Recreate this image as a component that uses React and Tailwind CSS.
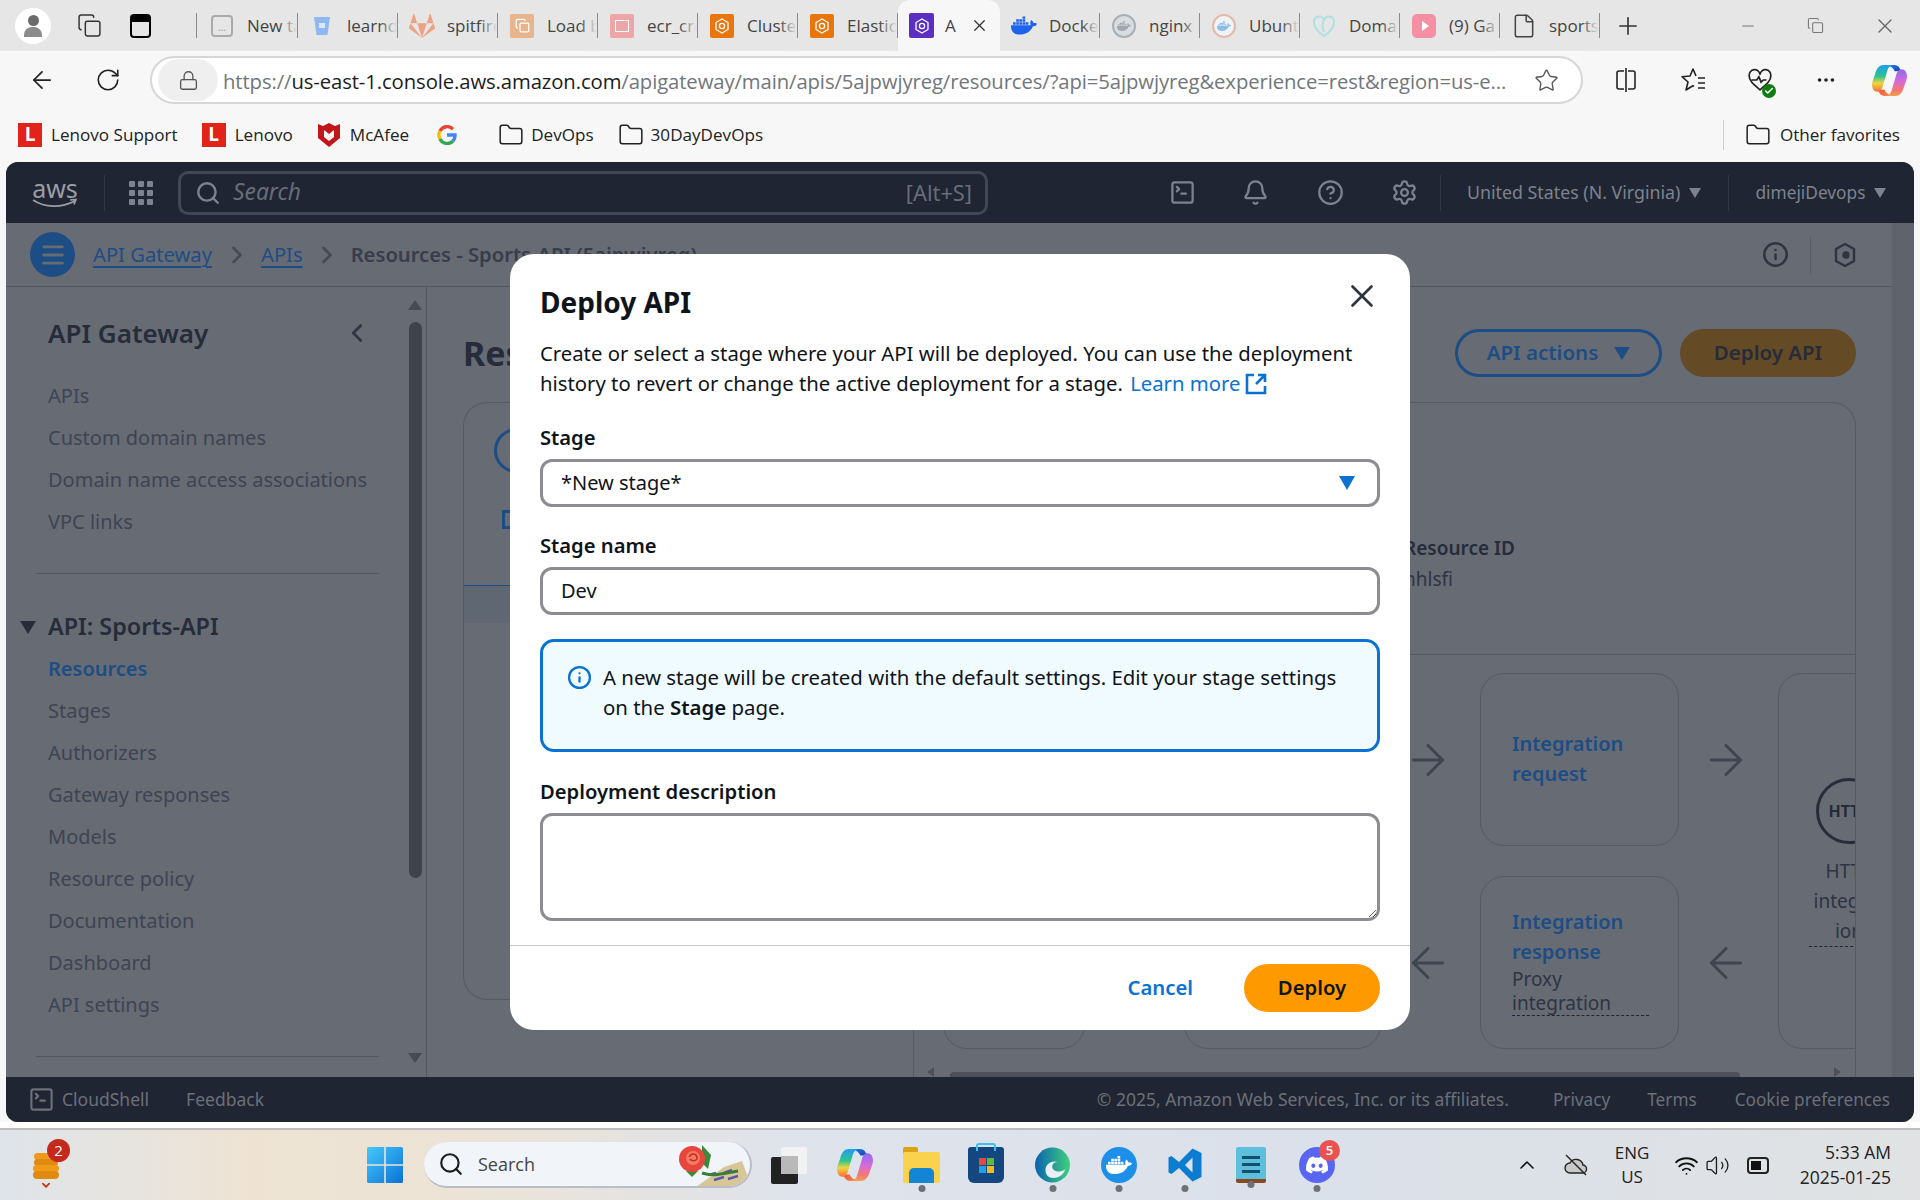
import React from "react";
import {
  ArrowLeft, ArrowRight, Bell, Check, ChevronDown, ChevronLeft, ChevronRight, ChevronUp, CircleHelp, Copy, File, Folder,
  Info, Lock, Menu, Minus, MoreHorizontal, Plus, RotateCw, Search, Settings, SquareTerminal, Star,
  Volume2, Wifi, X,
} from "lucide-react";
import { FaDiscord, FaDocker, FaGitlab } from "react-icons/fa";

const Square = ({ cls, children }) => (
  <span className={`flex h-[24px] w-[24px] shrink-0 items-center justify-center rounded-[2px] ${cls}`}>{children}</span>
);

const HexMark = ({ stroke = "#fff" }) => (
  <svg width="16" height="16" viewBox="0 0 16 16" fill="none" stroke={stroke} strokeWidth="1.3">
    <path d="M8 1l6 3.5v7L8 15l-6-3.5v-7z" />
    <circle cx="8" cy="8" r="2.6" />
  </svg>
);

const tabs = [
  { title: "New ta", icon: <span className="flex h-[22px] w-[22px] items-center justify-center rounded-[4px] border-2 border-[#aaa] pt-[3px] text-[10px] leading-none text-[#999]">...</span> },
  { title: "learnd", icon: <svg width="20" height="22" viewBox="0 0 20 22"><path d="M2 2h16l-2.5 18h-11z" fill="#8fb8f2" /><rect x="7" y="8" width="6" height="5" fill="#dbe8fb" /></svg> },
  { title: "spitfire", icon: <FaGitlab size={26} className="text-[#eda283]" /> },
  { title: "Load b", icon: <Square cls="bg-[#e8b48c]"><Copy size={15} className="text-white" /></Square> },
  { title: "ecr_cre", icon: <Square cls="bg-[#eca6a6]"><span className="h-[12px] w-[14px] border border-white" /></Square> },
  { title: "Cluste", icon: <Square cls="bg-[#e8760d]"><HexMark /></Square> },
  { title: "Elastic", icon: <Square cls="bg-[#e8760d]"><HexMark /></Square> },
];
const tabsRight = [
  { title: "Docke", icon: <FaDocker size={27} className="text-[#1d63ed]" /> },
  { title: "nginx", icon: <span className="flex h-[24px] w-[24px] items-center justify-center rounded-full border-2 border-[#a8b0b5] bg-[#d8dde0]"><FaDocker size={14} className="text-[#a0a8ad]" /></span> },
  { title: "Ubunt", icon: <span className="flex h-[24px] w-[24px] items-center justify-center rounded-full border-2 border-[#e5b9a8] bg-[#eef3f8]"><FaDocker size={14} className="text-[#8fbce6]" /></span> },
  { title: "Doma", icon: <svg width="24" height="24" viewBox="0 0 24 24" fill="none" stroke="#aee0e3" strokeWidth="2"><path d="M12 22C6 18 2 13 2 8a5 5 0 0 1 10-1 5 5 0 0 1 10 1c0 5-4 10-10 14z" /><path d="M12 7c-2 3-2 7 0 11" /></svg> },
  { title: "(9) Ga", icon: <span className="flex h-[24px] w-[24px] items-center justify-center rounded-[5px] bg-[#f58fa3]"><span className="ml-[2px] h-0 w-0 border-y-[5px] border-l-[7px] border-y-transparent border-l-white" /></span> },
  { title: "sports", icon: <File size={26} strokeWidth={1.4} className="text-[#444]" /> },
];

function Tab({ title, icon }) {
  return (
    <div className="relative flex h-[51px] w-[100px] shrink-0 items-center overflow-hidden pl-[11px]">
      <span className="flex w-[26px] shrink-0 justify-center">{icon}</span>
      <span className="ml-[12px] whitespace-nowrap text-[17px] text-[#444]">{title}</span>
      <span className="absolute right-[1px] top-0 h-full w-[18px] bg-gradient-to-r from-transparent to-[#e6e6e6]" />
      <span className="absolute right-0 top-[13px] h-[25px] w-px bg-[#8a8a8a]" />
    </div>
  );
}

function CopilotLogo({ size = 35 }) {
  return (
    <svg width={size} height={size} viewBox="0 0 34 32">
      <defs>
        <linearGradient id="cpLeft" x1="0" y1="0" x2="0" y2="1">
          <stop offset="0" stopColor="#1f9cf0" /><stop offset=".42" stopColor="#2fc48d" /><stop offset=".68" stopColor="#f2d53c" /><stop offset="1" stopColor="#f0703c" />
        </linearGradient>
        <linearGradient id="cpRight" x1="0" y1="0" x2="0" y2="1">
          <stop offset="0" stopColor="#8a6cf0" /><stop offset=".45" stopColor="#d86ad8" /><stop offset=".8" stopColor="#f57a70" /><stop offset="1" stopColor="#f2a04a" />
        </linearGradient>
        <linearGradient id="cpTop" x1="0" y1="0" x2="1" y2="1"><stop offset="0" stopColor="#1a7fe8" /><stop offset="1" stopColor="#1e3fb8" /></linearGradient>
        <linearGradient id="cpBottom" x1="0" y1="0" x2="1" y2="1"><stop offset="0" stopColor="#f0542c" /><stop offset="1" stopColor="#f58a5c" /></linearGradient>
      </defs>
      <path d="M14 1h8c3 0 5 2 6 6h-6c-1-3-4-5-8-6z" fill="url(#cpTop)" />
      <path d="M20 31h-8c-3 0-5-2-6-6h6c1 3 4 5 8 6z" fill="url(#cpBottom)" />
      <path d="M11 1h10c-3 0-5 2-6 5l-5 17c-1 2-2 4-5 4-3 0-5-3-5-7 0-2 1-5 3-10 1-5 4-9 8-9z" fill="url(#cpLeft)" />
      <path d="M23 31H13c3 0 5-2 6-5l5-17c1-2 2-4 5-4 3 0 5 3 5 7 0 2-1 5-3 10-1 5-4 9-8 9z" fill="url(#cpRight)" />
    </svg>
  );
}

function LenovoMark() {
  return (
    <span className="flex h-[24px] w-[24px] shrink-0 items-center justify-center bg-[#e2231a] text-[19px] font-bold leading-none text-white">L</span>
  );
}

function BrowserChrome() {
  return (
    <div className="shrink-0 font-['Open_Sans',sans-serif]">
      {/* tab strip */}
      <div className="flex h-[51px] items-center bg-[#e6e6e6]">
        <div className="flex h-[25px] w-[197px] shrink-0 items-center border-r border-[#8a8a8a]">
          <span className="ml-[15px] flex h-[36px] w-[36px] shrink-0 flex-col items-center justify-center rounded-full bg-white">
            <span className="h-[11px] w-[11px] rounded-full bg-[#6b6b6b]" />
            <span className="mt-[1px] h-[10px] w-[18px] rounded-t-[8px] bg-[#8c8c8c]" />
          </span>
          <Copy size={25} strokeWidth={1.4} className="ml-[26px] text-[#333]" />
          <span className="ml-[28px] h-[24px] w-[21px] rounded-[4px] border-2 border-black"><span className="block h-[6px] bg-black" /></span>
        </div>
        <div className="flex pl-px">
          {tabs.map((t) => <Tab key={t.title} {...t} />)}
        </div>
        <div className="flex h-[51px] w-[102px] shrink-0 items-center rounded-t-[12px] bg-[#f7f7f7] pl-[11px]">
          <span className="flex h-[25px] w-[25px] items-center justify-center rounded-[2px] bg-[#5a2fc2] text-white"><HexMark /></span>
          <span className="ml-[11px] text-[17px] text-[#444]">A</span>
          <X size={19} strokeWidth={1.6} className="ml-[14px] text-[#333]" />
        </div>
        <div className="flex">
          {tabsRight.map((t) => <Tab key={t.title} {...t} />)}
        </div>
        <Plus size={28} strokeWidth={1.4} className="ml-[14px] text-[#333]" />
        <Minus size={18} strokeWidth={1.4} className="ml-[97px] text-[#777]" />
        <Copy size={17} strokeWidth={1.5} className="ml-[50px] text-[#777]" />
        <X size={24} strokeWidth={1.4} className="ml-[49px] text-[#666]" />
      </div>
      {/* address row */}
      <div className="flex h-[58px] items-center bg-[#f7f7f7]">
        <ArrowLeft size={28} strokeWidth={1.5} className="ml-[28px] text-[#222]" />
        <RotateCw size={26} strokeWidth={1.5} className="ml-[39px] text-[#222]" />
        <div className="ml-[29px] flex h-[48px] w-[1433px] items-center rounded-full border-2 border-[#d6d6d6] bg-white">
          <span className="ml-[6px] flex h-[42px] w-[60px] items-center justify-center rounded-full bg-[#efefef]">
            <Lock size={21} strokeWidth={1.5} className="text-[#555]" />
          </span>
          <span className="ml-[5px] whitespace-nowrap pt-[2px] text-[20.3px] tracking-[-0.1px] text-[#71767c]">
            https://<span className="text-[#1c1c1c]">us-east-1.console.aws.amazon.com</span>/apigateway/main/apis/5ajpwjyreg/resources/?api=5ajpwjyreg&amp;experience=rest&amp;region=us-e...
          </span>
          <Star size={25} strokeWidth={1.3} className="ml-auto mr-[22px] text-[#555]" />
        </div>
        <svg width="22" height="26" viewBox="0 0 22 26" fill="none" stroke="#222" strokeWidth="1.6" className="ml-[32px]">
          <path d="M11 1v24M9 4H4a2 2 0 0 0-2 2v14a2 2 0 0 0 2 2h5M13 4h5a2 2 0 0 1 2 2v14a2 2 0 0 1-2 2h-5" />
        </svg>
        <svg width="26" height="26" viewBox="0 0 26 26" fill="none" stroke="#222" strokeWidth="1.6" className="ml-[43px]">
          <path d="M16 9l-3-7-3 7-8 .7 6 5.300-2 8 7-4.200 1 .6" strokeLinejoin="round" />
          <path d="M18 11h7M18 16h7M18 21h7" />
        </svg>
        <span className="relative ml-[41px] h-[26px] w-[26px]">
          <svg width="26" height="26" viewBox="0 0 24 24" fill="none" stroke="#222" strokeWidth="1.6"><path d="M12 21C6 16 2 13 2 8a5 5 0 0 1 10-1 5 5 0 0 1 10 1c0 5-4 8-10 13z" /><path d="M4 12h5l2-3 2 5 2-2h3" /></svg>
          <span className="absolute -bottom-[5px] -right-[3px] flex h-[14px] w-[14px] items-center justify-center rounded-full bg-[#107c10]"><Check size={10} strokeWidth={3.5} className="text-white" /></span>
        </span>
        <MoreHorizontal size={22} className="ml-[42px] text-[#222]" />
        <span className="ml-[35px]"><CopilotLogo /></span>
      </div>
      {/* favorites */}
      <div className="flex h-[51px] items-center bg-[#f7f7f7] text-[17.1px] text-[#222]">
        <span className="ml-[18px]"><LenovoMark /></span>
        <span className="ml-[9px]">Lenovo Support</span>
        <span className="ml-[24px]"><LenovoMark /></span>
        <span className="ml-[9px]">Lenovo</span>
        <svg width="22" height="26" viewBox="0 0 22 26" className="ml-[25px]"><path d="M0 2l5 2 6-3 6 3 5-2v14l-11 9L0 16z" fill="#c01818" /><path d="M6 8l5 4 5-4v7l-5 4-5-4z" fill="#f7f7f7" /></svg>
        <span className="ml-[10px]">McAfee</span>
        <svg width="20" height="20" viewBox="0 0 20 20" fill="none" strokeWidth="3.400" className="ml-[28px]">
          <path d="M16 4.200A8 8 0 0 0 3 6" stroke="#ea4335" />
          <path d="M3 6a8 8 0 0 0 0 8" stroke="#fbbc05" />
          <path d="M3 14a8 8 0 0 0 13 2" stroke="#34a853" />
          <path d="M16 16a8 8 0 0 0 2-6h-8" stroke="#4285f4" />
        </svg>
        <Folder size={26} strokeWidth={1.4} className="ml-[41px] text-[#222]" />
        <span className="ml-[7px]">DevOps</span>
        <Folder size={26} strokeWidth={1.4} className="ml-[24px] text-[#222]" />
        <span className="ml-[7px]">30DayDevOps</span>
        <span className="ml-auto h-[30px] w-px bg-[#d0d0d0]" />
        <Folder size={26} strokeWidth={1.4} className="ml-[21px] text-[#222]" />
        <span className="ml-[9px] mr-[20px]">Other favorites</span>
      </div>
    </div>
  );
}

const Caret = ({ cls }) => <span className={`h-0 w-0 border-x-[6px] border-t-[10px] border-x-transparent ${cls}`} />;

function TopNav() {
  return (
    <div className="flex h-[61px] shrink-0 items-center rounded-t-[12px] bg-[#1f2533] text-[17.800px] text-[#7d838e]">
      <div className="ml-[26px] flex w-[46px] flex-col items-center">
        <span className="text-[25px] leading-[20px] text-[#9a9ea6]">aws</span>
        <svg width="46" height="10" viewBox="0 0 46 10" fill="none" stroke="#9a9ea6" strokeWidth="1.6"><path d="M1 2c12 8 28 8 42 1M38 2l6-.5-2 5" /></svg>
      </div>
      <span className="ml-[26px] h-[36px] w-px bg-[#2f3644]" />
      <div className="ml-[24px] grid grid-cols-3 gap-[3px]">
        {[0, 1, 2, 3, 4, 5, 6, 7, 8].map((i) => <span key={i} className="h-[6px] w-[6px] rounded-[1px] bg-[#7d838e]" />)}
      </div>
      <div className="ml-[25px] flex h-[44px] w-[810px] items-center rounded-[10px] border-[3px] border-[#414754] pl-[14px] pr-[13px]">
        <Search size={26} strokeWidth={2.2} className="text-[#7d838e]" />
        <span className="ml-[12px] text-[22.800px] italic leading-none text-[#676d78]">Search</span>
        <span className="ml-auto text-[21.800px] leading-none text-[#676d78]">[Alt+S]</span>
      </div>
      <SquareTerminal size={27} strokeWidth={2} className="ml-[181px]" />
      <Bell size={27} strokeWidth={2} className="ml-[46px]" />
      <CircleHelp size={27} strokeWidth={2} className="ml-[48px]" />
      <Settings size={27} strokeWidth={2} className="ml-[47px]" />
      <span className="ml-[22px] h-[36px] w-px bg-[#2f3644]" />
      <span className="ml-[26px] whitespace-nowrap">United States (N. Virginia)</span>
      <Caret cls="ml-[9px] border-t-[#7d838e]" />
      <span className="ml-[27px] h-[36px] w-px bg-[#2f3644]" />
      <span className="ml-[26px] whitespace-nowrap text-[17.300px]">dimejiDevops</span>
      <Caret cls="ml-[9px] border-t-[#7d838e]" />
    </div>
  );
}

function Breadcrumbs() {
  return (
    <div className="flex h-[64px] w-[1886px] shrink-0 items-center border-b border-[#535762] text-[20.200px]">
      <span className="ml-[24px] flex h-[45px] w-[45px] items-center justify-center rounded-full bg-[#1d4d85]">
        <Menu size={28} strokeWidth={2.4} className="text-[#676b74]" />
      </span>
      <a className="ml-[18px] text-[#1d4d85] underline underline-offset-[4px]">API Gateway</a>
      <ChevronRight size={28} strokeWidth={2.2} className="ml-[11px] text-[#454a56]" />
      <a className="ml-[10px] text-[#1d4d85] underline underline-offset-[4px]">APIs</a>
      <ChevronRight size={28} strokeWidth={2.2} className="ml-[10px] text-[#454a56]" />
      <span className="ml-[10px] whitespace-nowrap font-semibold text-[#373d4b]">Resources - Sports-API (5ajpwjyreg)</span>
      <Info size={27} strokeWidth={2.2} className="ml-auto mr-[21px] text-[#2e3442]" />
      <span className="h-[38px] w-px bg-[#585c66]" />
      <svg width="24" height="26" viewBox="0 0 24 26" fill="none" stroke="#2e3442" strokeWidth="2.4" className="ml-[22px] mr-[35px]"><path d="M12 2l9 5v12l-9 5-9-5V7z" /><circle cx="13" cy="13" r="2.5" fill="#2e3442" /></svg>
    </div>
  );
}

const group1 = ["APIs", "Custom domain names", "Domain name access associations", "VPC links"];
const group2 = ["Stages", "Authorizers", "Gateway responses", "Models", "Resource policy", "Documentation", "Dashboard", "API settings"];

function Sidebar() {
  return (
    <aside className="flex h-full w-[421px] shrink-0 border-r border-[#535762] text-[20px] text-[#3e4452]">
      <div className="w-[400px] shrink-0">
        <div className="mt-[28px] flex h-[36px] items-center pl-[42px] pr-[34px]">
          <h2 className="text-[26px] font-semibold text-[#262c3a]">API Gateway</h2>
          <ChevronLeft size={30} strokeWidth={2.2} className="ml-auto text-[#2f3543]" />
        </div>
        <ul className="mt-[24px] pl-[42px]">
          {group1.map((x) => <li key={x} className="flex h-[42px] items-center whitespace-nowrap">{x}</li>)}
        </ul>
        <div className="ml-[30px] mt-[30px] h-px w-[343px] bg-[#535762]" />
        <div className="mt-[33px] flex h-[40px] items-center">
          <Caret cls="ml-[14px] border-x-[8px] border-t-[13px] border-t-[#262c3a]" />
          <span className="ml-[12px] text-[23.400px] font-semibold text-[#262c3a]">API: Sports-API</span>
        </div>
        <ul className="mt-px pl-[42px]">
          <li className="flex h-[42px] items-center font-semibold text-[#1d4d85]">Resources</li>
          {group2.map((x) => <li key={x} className="flex h-[42px] items-center">{x}</li>)}
        </ul>
        <div className="ml-[30px] mt-[30px] h-px w-[343px] bg-[#535762]" />
      </div>
      {/* scroll bar */}
      <div className="flex w-[18px] flex-col items-center">
        <span className="mt-[13px] h-0 w-0 border-x-[7px] border-b-[10px] border-x-transparent border-b-[#454a54]" />
        <span className="mt-[12px] h-[556px] w-[13px] rounded-full bg-[#3f434d]" />
        <span className="mt-[175px] h-0 w-0 border-x-[7px] border-t-[10px] border-x-transparent border-t-[#454a54]" />
      </div>
    </aside>
  );
}

const Box = ({ cls = "", children }) => (
  <div className={`rounded-[24px] border border-[#565a66] ${cls}`}>{children}</div>
);

function Arrows() {
  return (
    <div className="flex w-[99px] shrink-0 flex-col gap-[30px] text-[#3f4451]">
      <div className="flex h-[173px] items-center justify-center pr-[5px]"><ArrowRight size={50} strokeWidth={1.4} /></div>
      <div className="flex h-[173px] items-center justify-center pr-[5px]"><ArrowLeft size={50} strokeWidth={1.4} /></div>
    </div>
  );
}

function Content() {
  return (
    <section className="relative h-full w-[1465px] shrink-0 overflow-hidden pl-[36px] pr-[36px] pt-[42px]">
      <div className="flex h-[48px] items-center">
        <h1 className="text-[34px] font-bold text-[#262c3a]">Resources</h1>
        <button className="ml-auto flex h-[48px] w-[207px] items-center justify-center gap-[16px] rounded-full border-[3px] border-[#1d4d85] pb-[2px] text-[20.500px] font-semibold text-[#1d4d85]">
          API actions <Caret cls="mt-[2px] border-x-[8px] border-t-[13px] border-t-[#1d4d85]" />
        </button>
        <button className="ml-[18px] h-[48px] w-[176px] rounded-full bg-[#644a25] pb-[2px] text-[20.500px] font-semibold text-[#262c3a]">Deploy API</button>
      </div>
      <div className="mt-[25px] flex">
        {/* resource tree panel */}
        <div className="h-[598px] w-[450px] shrink-0 rounded-bl-[24px] rounded-tl-[24px] border border-r-0 border-[#565a66] pt-[25px]">
          <span className="ml-[30px] block h-[45px] w-[45px] rounded-full border-[3px] border-[#1d4d85]" />
          <span className="ml-[38px] mt-[37px] block h-[19px] w-[19px] border-[3px] border-[#1d4d85]" />
          <div className="mt-[56px] h-[38px] border-t border-[#1d4d85] bg-[#5f6872]" />
        </div>
        {/* method details panel */}
        <div className="h-[700px] min-w-0 flex-1 overflow-hidden rounded-tr-[24px] border border-b-0 border-[#565a66]">
          <div className="flex h-[252px] flex-col justify-end border-b border-[#565a66] pb-[61px] pl-[490px] text-[19px]">
            <span className="font-semibold text-[#262c3a]">Resource ID</span>
            <span className="mt-[2px] text-[#2e3442]">nhlsfi</span>
          </div>
          <div className="flex pl-[29px] pt-[18px]">
            <div className="flex w-[142px] shrink-0 flex-col gap-[30px]"><Box cls="h-[173px]" /><Box cls="h-[173px]" /></div>
            <Arrows />
            <div className="flex w-[197px] shrink-0 flex-col gap-[30px]"><Box cls="h-[173px]" /><Box cls="h-[173px]" /></div>
            <Arrows />
            <div className="flex w-[199px] shrink-0 flex-col gap-[30px] text-[20px] leading-[30px]">
              <Box cls="flex h-[173px] flex-col justify-center pb-[2px] pl-[31px] font-semibold text-[#1d4d85]"><span>Integration</span><span>request</span></Box>
              <Box cls="flex h-[173px] flex-col justify-center pb-[2px] pl-[31px]">
                <span className="font-semibold text-[#1d4d85]">Integration</span>
                <span className="font-semibold text-[#1d4d85]">response</span>
                <span className="text-[19px] leading-[24px] text-[#2e3442]">Proxy</span>
                <span className="mr-[29px] border-b border-dashed border-[#1f2533] text-[19px] leading-[24px] text-[#2e3442]">integration</span>
              </Box>
            </div>
            <Arrows />
            <Box cls="flex h-[376px] w-[142px] shrink-0 flex-col items-center pt-[104px] text-[19px] leading-[30px] text-[#2e3442]">
              <span className="flex h-[66px] w-[66px] items-center justify-center rounded-full border-[3px] border-[#262c3a] text-[16px] font-bold text-[#262c3a]">HTTP</span>
              <span className="mt-[12px] text-center">HTTP</span>
              <span>integrat</span>
              <span className="w-[80px] border-b border-dashed border-[#1f2533] text-center">ion</span>
            </Box>
          </div>
        </div>
      </div>
      {/* horizontal scroller of the diagram */}
      <span className="absolute bottom-0 left-[523px] h-[5px] w-[790px] rounded-t-[4px] bg-[#4d505a]" />
      <span className="absolute bottom-0 left-[500px] h-0 w-0 border-y-[5px] border-r-[7px] border-y-transparent border-r-[#4d505a]" />
      <span className="absolute bottom-0 left-[1407px] h-0 w-0 border-y-[5px] border-l-[7px] border-y-transparent border-l-[#4d505a]" />
    </section>
  );
}

function Field({ label, children, cls }) {
  return (
    <div className={cls}>
      <label className="block text-[20.200px] font-semibold leading-[26px] text-[#0f141a]">{label}</label>
      <div className="mt-[9px]">{children}</div>
    </div>
  );
}

const inputCls = "flex h-[48px] w-full items-center rounded-[12px] border-[3px] border-[#8c8c94] bg-white px-[18px] text-[20px] text-[#0f141a] outline-none";

function DeployModal() {
  return (
    <div className="absolute left-[504px] top-[92px] flex h-[776px] w-[900px] flex-col rounded-[24px] bg-white text-[20.300px] leading-[30px] text-[#0f141a]">
      <div className="px-[30px] pt-[30px]">
        <div className="flex h-[36px] items-center justify-between">
          <h2 className="text-[28px] font-bold leading-[36px]">Deploy API</h2>
          <X size={38} strokeWidth={1.7} className="-mr-[1px] -mt-[12px] text-[#2e3442]" />
        </div>
        <p className="mt-[18px]">
          Create or select a stage where your API will be deployed. You can use the deployment history to revert or change the active deployment for a stage.{" "}
          <a className="ml-[2px] text-[#0972d3]">
            Learn more
            <svg width="22" height="22" viewBox="0 0 22 22" fill="none" stroke="currentColor" strokeWidth="2.6" className="ml-[5px] inline-block align-[-4px]">
              <path d="M9 2H2v18h18v-7M13 2h7v7M20 2l-9 9" />
            </svg>
          </a>
        </p>
        <Field label="Stage" cls="mt-[26px]">
          <div className={inputCls}>
            <span>*New stage*</span>
            <Caret cls="ml-auto mr-[4px] border-x-[8px] border-t-[14px] border-t-[#0972d3]" />
          </div>
        </Field>
        <Field label="Stage name" cls="mt-[25px]">
          <input className={`${inputCls} pb-[2px]`} defaultValue="Dev" readOnly />
        </Field>
        <div className="mt-[24px] flex h-[113px] rounded-[14px] border-[3px] border-[#0972d3] bg-[#f0fbff] pl-[24px] pt-[20px]">
          <Info size={25} strokeWidth={2.2} className="mt-[3px] shrink-0 text-[#0972d3]" />
          <p className="ml-[11px] w-[750px] text-[20.400px]">A new stage will be created with the default settings. Edit your stage settings on the <b className="font-semibold">Stage</b> page.</p>
        </div>
        <Field label="Deployment description" cls="mt-[26px]">
          <textarea className="block h-[108px] w-full resize-y rounded-[12px] border-[3px] border-[#8c8c94] bg-white outline-none" />
        </Field>
      </div>
      <div className="mt-[24px] flex flex-1 items-start justify-end border-t border-[#c6c6cd] px-[30px] pt-[18px]">
        <button className="mr-[51px] mt-[8px] font-semibold leading-[30px] text-[#0972d3]">Cancel</button>
        <button className="h-[48px] w-[136px] rounded-full bg-[#ff9900] pb-[2px] font-semibold text-[#0f141a]">Deploy</button>
      </div>
    </div>
  );
}

function Footer() {
  return (
    <div className="flex h-[45px] shrink-0 items-center rounded-b-[12px] bg-[#1f2533] text-[17.200px] text-[#6b7079]">
      <SquareTerminal size={27} strokeWidth={1.9} className="ml-[22px]" />
      <span className="ml-[7px] text-[17.500px]">CloudShell</span>
      <span className="ml-[37px] text-[17.500px]">Feedback</span>
      <span className="ml-auto whitespace-nowrap text-[17.500px]">© 2025, Amazon Web Services, Inc. or its affiliates.</span>
      <span className="ml-[44px]">Privacy</span>
      <span className="ml-[37px]">Terms</span>
      <span className="ml-[38px] mr-[24px]">Cookie preferences</span>
    </div>
  );
}

const Dot = () => <span className="absolute -bottom-[9px] left-1/2 h-[7px] w-[7px] -translate-x-1/2 rounded-full bg-[#6e7278]" />;

function Taskbar() {
  return (
    <div className="flex h-[70px] shrink-0 items-center bg-[linear-gradient(90deg,#dfe4ea_0%,#eee3d3_13%,#ece3d6_24%,#dee3ec_42%,#dbe1ea_70%,#e0e2e3_100%)] font-['Open_Sans',sans-serif]">
      <span className="relative ml-[31px] flex h-[52px] w-[30px] flex-col items-center pt-[14px]">
        <span className="h-[8px] w-[24px] rounded-full bg-[#f09a1a]" />
        <span className="-mt-[1px] h-[8px] w-[24px] rounded-full bg-[#e08a10]" />
        <span className="-mt-[1px] h-[8px] w-[26px] rounded-full bg-[#f09a1a]" />
        <span className="-mt-[1px] h-[8px] w-[26px] rounded-full bg-[#e08a10]" />
        <ChevronDown size={14} strokeWidth={3.5} className="text-[#c33a12]" />
        <span className="absolute -right-[9px] top-[0px] flex h-[23px] w-[23px] items-center justify-center rounded-full bg-[#c4291c] text-[15px] leading-none text-white">2</span>
      </span>
      <svg width="36" height="36" viewBox="0 0 36 36" className="ml-[306px]">
        <defs><linearGradient id="win" x1="0" y1="0" x2="1" y2="1"><stop offset="0" stopColor="#46c8fa" /><stop offset="1" stopColor="#0a72d6" /></linearGradient></defs>
        <path d="M0 1.5A1.5 1.5 0 0 1 1.5 0h15.7v17.2H0zM18.800 0h15.700A1.500 1.500 0 0 1 36 1.500v15.700H18.800zM0 18.800h17.200V36H1.500A1.500 1.500 0 0 1 0 34.500zM18.800 18.800H36v15.700a1.500 1.500 0 0 1-1.500 1.500H18.800z" fill="url(#win)" />
      </svg>
      <div className="ml-[21px] flex h-[46px] w-[328px] items-center overflow-hidden rounded-full border-b-2 border-r-2 border-[#b9bec6] bg-[#f1f4f8] pl-[14px]">
        <Search size={26} strokeWidth={2} className="text-[#1c1c1c]" />
        <span className="ml-[14px] text-[18px] text-[#444]">Search</span>
        <svg width="72" height="46" viewBox="0 0 72 46" className="ml-auto">
          <path d="M18 46L46 26l18-6 8 22-6 4z" fill="#d8c796" />
          <path d="M30 34l8-2M36 39l10-3M46 32l8-3M50 38l10-3" stroke="#5a58a8" strokeWidth="2.500" />
          <path d="M24 32c12 4 22 0 36-2" stroke="#3a7d3a" strokeWidth="3" fill="none" />
          <path d="M24 4l9 10-3 14-6-6z" fill="#3a8a3a" />
          <path d="M8 30l6 6 6-6z" fill="#3a8a3a" />
          <circle cx="14" cy="18" r="13" fill="#e8463c" />
          <circle cx="15" cy="17" r="7" fill="#f47b62" />
          <path d="M11 16c2-4 7-4 8 0s-5 5-7 2" stroke="#c52c22" strokeWidth="1.500" fill="none" />
        </svg>
      </div>
      <span className="relative ml-[19px] h-[37px] w-[36px]">
        <span className="absolute right-0 top-0 h-[27px] w-[26px] rounded-[2px] bg-[#f2f2f2]" />
        <span className="absolute bottom-0 left-0 h-[27px] w-[27px] rounded-[2px] bg-[#222]" />
        <span className="absolute left-[10px] top-[9px] h-[18px] w-[17px] bg-[#b9b9b9]" />
      </span>
      <span className="ml-[30px]"><CopilotLogo size={36} /></span>
      <span className="relative ml-[30px] h-[36px] w-[37px]">
        <span className="absolute left-0 top-0 h-[10px] w-[15px] rounded-t-[2px] bg-[#d9a312]" />
        <span className="absolute bottom-0 left-0 top-[5px] w-full rounded-[2px] bg-[#fbd24e]" />
        <span className="absolute bottom-0 left-[6px] h-[15px] w-[25px] rounded-t-[5px] bg-[#1485d2]" />
        <Dot />
      </span>
      <span className="relative ml-[28px] flex h-[36px] w-[36px] items-center justify-center rounded-b-[6px] rounded-t-[3px] bg-[#14467f]">
        <span className="absolute -top-[4px] left-[8px] h-[8px] w-[20px] rounded-t-[3px] border-2 border-b-0 border-[#3cc0f0]" />
        <span className="grid grid-cols-2 gap-[1px]">
          <i className="h-[7px] w-[7px] bg-[#e8483a]" /><i className="h-[7px] w-[7px] bg-[#62b83a]" /><i className="h-[7px] w-[7px] bg-[#20a0e8]" /><i className="h-[7px] w-[7px] bg-[#f6b81c]" />
        </span>
      </span>
      <span className="relative ml-[30px] h-[36px] w-[37px]">
        <svg width="37" height="36" viewBox="0 0 36 36"><defs><linearGradient id="edge" x1="0" y1="0" x2="1" y2="0"><stop offset="0" stopColor="#0a62b0" /><stop offset="1" stopColor="#3fd07c" /></linearGradient></defs><circle cx="18" cy="18" r="17.500" fill="url(#edge)" /><path d="M31 22c-2 6-7 9-12 9-5 0-8-3-8-8 0-6 6-10 12-8-4 0-6 3-5 6 1 4 8 5 13 1z" fill="#e8eff6" /></svg>
        <Dot />
      </span>
      <span className="relative ml-[30px] flex h-[36px] w-[36px] items-center justify-center rounded-full bg-[#1d8fe8]">
        <FaDocker size={26} className="text-white" />
        <Dot />
      </span>
      <span className="relative ml-[29px] h-[36px] w-[38px]">
        <svg width="38" height="36" viewBox="0 0 24 24"><path d="M17 1l6 3v16l-6 3L8 14l-5 4-2-1V7l2-1 5 4zM17 7l-5 5 5 5z" fill="#0c7cd0" fillRule="evenodd" /></svg>
        <Dot />
      </span>
      <span className="relative ml-[32px] flex h-[36px] w-[30px] flex-col gap-[4px] rounded-[2px] border-b-[4px] border-[#8a4a20] bg-[#5cc0dc] px-[6px] pt-[9px]">
        <i className="h-[3px] bg-[#14506e]" /><i className="h-[3px] bg-[#14506e]" /><i className="h-[3px] bg-[#14506e]" />
        <Dot />
      </span>
      <span className="relative ml-[33px] flex h-[36px] w-[36px] items-center justify-center rounded-full bg-[#5865f2]">
        <FaDiscord size={24} className="text-white" />
        <span className="absolute -right-[5px] -top-[7px] flex h-[21px] w-[21px] items-center justify-center rounded-full bg-[#e8534f] text-[13px] font-semibold leading-none text-white">5</span>
        <Dot />
      </span>
      <ChevronUp size={24} strokeWidth={1.6} className="ml-[180px] text-[#111]" />
      <svg width="26" height="26" viewBox="0 0 26 26" fill="#c8c8c8" stroke="#222" strokeWidth="1.4" className="ml-[24px]"><path d="M7 21a5 5 0 0 1 0-10 7 7 0 0 1 13 2 4 4 0 0 1-1 8z" /><path d="M3 3l20 20" /></svg>
      <div className="ml-[23px] w-[40px] text-center text-[17px] leading-[24px] text-[#222]"><div>ENG</div><div>US</div></div>
      <Wifi size={25} strokeWidth={1.8} className="ml-[22px] text-[#111]" />
      <Volume2 size={25} strokeWidth={1.3} className="ml-[6px] text-[#222]" />
      <span className="ml-[17px] flex h-[17px] w-[22px] items-center rounded-[4px] border-2 border-[#222] px-[2px]"><i className="h-[9px] w-[10px] bg-[#111]" /></span>
      <div className="ml-auto mr-[29px] text-right text-[17.500px] leading-[25px] text-[#222]"><div>5:33 AM</div><div>2025-01-25</div></div>
    </div>
  );
}

export default function App() {
  return (
    <div className="flex h-[1200px] w-[1920px] flex-col overflow-hidden bg-[#f7f7f7] font-['Noto_Sans',sans-serif]">
      <BrowserChrome />
      <div className="relative ml-[6px] mt-[2px] flex h-[960px] w-[1908px] shrink-0 flex-col rounded-[12px] bg-[#5f636c]">
        <TopNav />
        <div className="flex h-[854px] w-[1886px] shrink-0 flex-col bg-[#676b74]">
          <Breadcrumbs />
          <div className="flex h-[790px]">
            <Sidebar />
            <Content />
          </div>
        </div>
        <Footer />
        <DeployModal />
      </div>
      <div className="h-[6px] shrink-0 bg-white" />
      <div className="h-[2px] shrink-0 bg-[#bdbdbd]" />
      <Taskbar />
    </div>
  );
}
